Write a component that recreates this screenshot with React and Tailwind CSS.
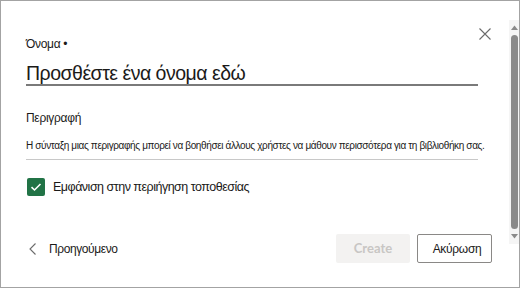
import React from "react";

export default function App() {
  const font = { fontFamily: '"Liberation Sans", Arial, sans-serif' };
  return (
    <div className="w-[520px] h-[288px] bg-white border border-[#a3a3a3] flex relative text-[#1b1a19] overflow-hidden" style={font}>
      <button className="absolute left-[478px] top-[27px] w-[12px] h-[12px] text-[#605e5c]">
        <svg width="12" height="12" viewBox="0 0 12 12" fill="none" stroke="#6b6b6b" strokeWidth="1.1">
          <path d="M0.5 0.5 L11.5 11.5 M11.5 0.5 L0.5 11.5" />
        </svg>
      </button>
      <div className="flex-1 min-w-0 flex flex-col pl-[25px] pr-[31px]">
        <div className="mt-[35px] text-[12px] leading-[16px] tracking-[-0.3px]">Όνομα •</div>
        <div className="mt-[10px] text-[19.5px] leading-[22px] border-b-2 border-[#7a7a7a] tracking-[-0.5px]">Προσθέστε ένα όνομα εδώ</div>
        <div className="mt-[24px] text-[12px] leading-[16px] tracking-[-0.3px]">Περιγραφή</div>
        <div className="mt-[13px] text-[10px] leading-[14px] pb-[6px] border-b border-[#c8c8c8] whitespace-nowrap tracking-[-0.37px]">
          Η σύνταξη μιας περιγραφής μπορεί να βοηθήσει άλλους χρήστες να μάθουν περισσότερα για τη βιβλιοθήκη σας.
        </div>
        <div className="mt-[18px] flex items-center gap-[8px]">
          <div className="w-[18px] h-[18px] rounded-[2px] bg-[#217346] flex items-center justify-center ml-[1px]">
            <svg width="12" height="10" viewBox="0 0 12 10" fill="none" stroke="white" strokeWidth="1.6">
              <path d="M1.5 5.2 L4.5 8 L10.5 2" />
            </svg>
          </div>
          <span className="text-[12.5px] leading-[18px] tracking-[-0.5px]">Εμφάνιση στην περιήγηση τοποθεσίας</span>
        </div>
        <div className="mt-auto mb-[24px] flex items-center">
          <div className="flex items-center gap-[13px] ml-[3px]">
            <svg width="7" height="12" viewBox="0 0 7 12" fill="none" stroke="#6b6b6b" strokeWidth="1.1">
              <path d="M6.5 0.5 L1 6 L6.5 11.5" />
            </svg>
            <span className="text-[12px] leading-[16px] tracking-[-0.4px]">Προηγούμενο</span>
          </div>
          <div className="ml-auto mr-[-14px] flex gap-[7px]">
            <div className="w-[74px] h-[29px] bg-[#f3f2f1] rounded-[2px] flex items-center justify-center text-[13px] font-bold text-[#c8c6c4]" style={{ fontFamily: 'Lato, "Open Sans", sans-serif' }}>Create</div>
            <div className="w-[75px] h-[29px] border border-[#8a8886] rounded-[2px] flex items-center justify-center text-[12px] pl-[5px] tracking-[-0.3px]">Ακύρωση</div>
          </div>
        </div>
      </div>
      <div className="w-[10px] shrink-0 pt-[19px] flex flex-col">
        <div className="h-[224px] w-[10px] bg-[#f5f5f5] flex flex-col items-center">
          <svg className="mt-[5px]" width="7" height="5" viewBox="0 0 7 5"><path d="M0 5 L3.5 0.5 L7 5 Z" fill="#8a8a8a" /></svg>
          <div className="mt-[5px] w-[7px] flex-1 rounded-full bg-[#8a8a8a]"></div>
          <svg className="mt-[5px] mb-[5px]" width="7" height="5" viewBox="0 0 7 5"><path d="M0 0 L7 0 L3.5 4.5 Z" fill="#8a8a8a" /></svg>
        </div>
      </div>
    </div>
  );
}
